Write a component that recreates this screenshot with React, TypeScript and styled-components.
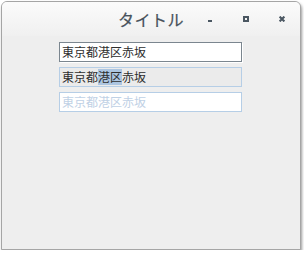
import React from 'react';
import styled, { createGlobalStyle } from 'styled-components';

const Global = createGlobalStyle`
  html, body { margin: 0; padding: 0; background: #ffffff; }
  * { box-sizing: border-box; }
`;

const Window = styled.div`
  margin: 1px 0 0 1px;
  width: 300px;
  height: 249px;
  border: 1px solid #a5a5a5;
  border-radius: 6px 6px 0 0;
  background: #eeeeee;
  box-shadow: 1px 2px 3px rgba(0, 0, 0, 0.4);
  display: flex;
  flex-direction: column;
  overflow: hidden;
  font-family: "Noto Sans CJK JP", "Noto Sans", sans-serif;
`;

const TitleBar = styled.div`
  height: 34px;
  flex: none;
  display: grid;
  grid-template-columns: 1fr auto 1fr;
  align-items: center;
  background: linear-gradient(#fbfbfb, #f0f0f0);
`;

const Title = styled.div`
  grid-column: 2;
  font-size: 16px;
  line-height: 20px;
  color: #48525c;
  letter-spacing: 0.5px;
  -webkit-text-stroke: 0.2px #48525c;
`;

const Controls = styled.div`
  grid-column: 3;
  display: flex;
  justify-content: flex-end;
  height: 100%;
`;

const ControlButton = styled.div`
  width: 36px;
  display: flex;
  align-items: center;
  justify-content: center;
  color: #4b5762;
`;

const Content = styled.div`
  padding: 6px 0 0 57px;
  display: flex;
  flex-direction: column;
  gap: 5px;
`;

const Field = styled.div<{ $variant: 'focused' | 'selected' | 'disabled' }>`
  width: 183px;
  height: 20px;
  padding: 0 2px;
  font-size: 12px;
  line-height: 18px;
  white-space: nowrap;
  overflow: hidden;
  border: 1px solid ${({ $variant }) => ($variant === 'focused' ? '#7b868f' : '#b6cee6')};
  background: ${({ $variant }) => ($variant === 'selected' ? '#ebebeb' : '#ffffff')};
  color: ${({ $variant }) => ($variant === 'disabled' ? '#bfd1e5' : '#2e2e2e')};
  box-shadow: ${({ $variant }) => ($variant === 'focused' ? '1px 1px 0 #ffffff' : 'none')};
`;

const Selection = styled.span`
  background: #adc6e1;
  display: inline-block;
  line-height: 16px;
`;

const App: React.FC = () => (
  <>
    <Global />
    <Window>
      <TitleBar>
        <Title>タイトル</Title>
        <Controls>
          <ControlButton>
            <svg width="4" height="2" viewBox="0 0 4 2" style={{ marginTop: 3 }}>
              <rect width="4" height="2" fill="currentColor" />
            </svg>
          </ControlButton>
          <ControlButton>
            <svg width="6" height="6" viewBox="0 0 6 6">
              <path d="M0 0h6v6H0z M2 2v2h2V2z" fill="currentColor" fillRule="evenodd" />
            </svg>
          </ControlButton>
          <ControlButton>
            <svg width="6" height="6" viewBox="0 0 6 6">
              <path d="M0.6 0.6L5.4 5.4M5.4 0.6L0.6 5.4" stroke="currentColor" strokeWidth="2.1" />
            </svg>
          </ControlButton>
        </Controls>
      </TitleBar>
      <Content>
        <Field $variant="focused">東京都港区赤坂</Field>
        <Field $variant="selected">
          東京都<Selection>港区</Selection>赤坂
        </Field>
        <Field $variant="disabled">東京都港区赤坂</Field>
      </Content>
    </Window>
  </>
);

export default App;
